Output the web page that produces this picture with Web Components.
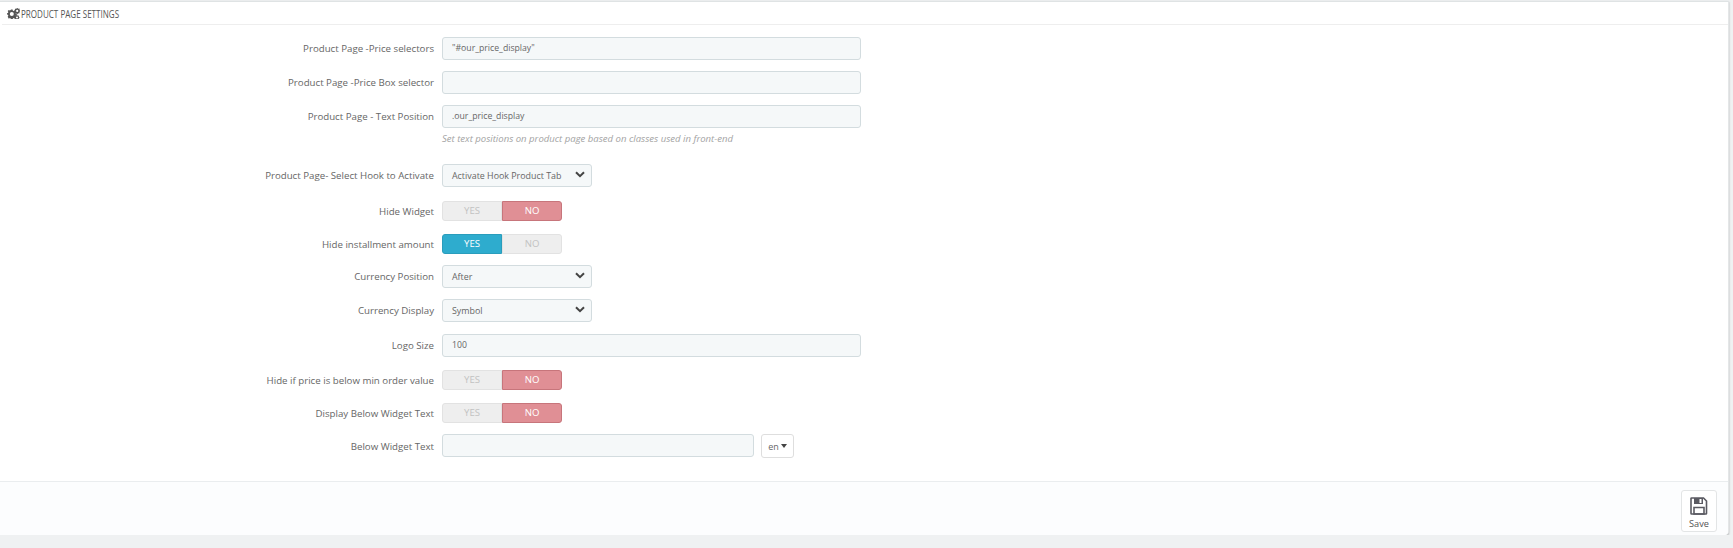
<!DOCTYPE html>
<html>
<head>
<meta charset="utf-8">
<title>Product page settings</title>
<style>
  html, body { margin: 0; background: #eff1f2; }
  body { font-family: "Open Sans", sans-serif; font-size: 10px; color: #555; }
</style>
</head>
<body>
<settings-panel>
  <span slot="title">Product Page Settings</span>
  <form-row label="Product Page -Price selectors" gap="11"><text-input value="&quot;#our_price_display&quot;"></text-input></form-row>
  <form-row label="Product Page -Price Box selector" gap="11"><text-input></text-input></form-row>
  <form-row label="Product Page - Text Position" gap="36" help="Set text positions on product page based on classes used in front-end"><text-input value=".our_price_display"></text-input></form-row>
  <form-row label="Product Page- Select Hook to Activate" gap="14"><select-box value="Activate Hook Product Tab"></select-box></form-row>
  <form-row label="Hide Widget" gap="13"><toggle-switch></toggle-switch></form-row>
  <form-row label="Hide installment amount" gap="11"><toggle-switch on></toggle-switch></form-row>
  <form-row label="Currency Position" gap="11"><select-box value="After"></select-box></form-row>
  <form-row label="Currency Display" gap="12"><select-box value="Symbol"></select-box></form-row>
  <form-row label="Logo Size" gap="13"><text-input value="100"></text-input></form-row>
  <form-row label="Hide if price is below min order value" gap="13"><toggle-switch></toggle-switch></form-row>
  <form-row label="Display Below Widget Text" gap="11"><toggle-switch></toggle-switch></form-row>
  <form-row label="Below Widget Text" gap="0"><text-input short></text-input><lang-button>en</lang-button></form-row>
  <save-button slot="footer">Save</save-button>
</settings-panel>

<script>
class SettingsPanel extends HTMLElement {
  constructor() {
    super();
    this.attachShadow({ mode: 'open' }).innerHTML = `
      <style>
        :host {
          display: flex;
          flex-direction: column;
          width: 1729px;
          height: 534px;
          margin-top: 1px;
          box-sizing: border-box;
          background: #fff;
          border-top: 1px solid #dfe3e4;
          border-right: 1px solid #e4e6e7;
          border-radius: 0 0 4px 0;
          box-shadow: 0 1px 2px rgba(0, 0, 0, 0.3);
        }
        .heading {
          display: flex;
          align-items: center;
          gap: 1px;
          height: 22px;
          margin-left: 2px;
          padding-left: 5px;
          border-bottom: 1px solid #eeeeee;
          color: #555;
        }
        .title {
          display: inline-block;
          font-size: 11.5px;
          text-transform: uppercase;
          white-space: nowrap;
          transform: scaleX(0.7);
          transform-origin: left center;
        }
        svg { display: block; }
        .body { flex: 1; padding-top: 12px; }
        .footer {
          display: flex;
          justify-content: flex-end;
          height: 54px;
          box-sizing: border-box;
          padding: 8px 11px 0 0;
          background: #fcfdfe;
          border-top: 1px solid #eaedef;
          border-radius: 0 0 4px 0;
        }
      </style>
      <div class="heading">
        <svg width="13" height="11" viewBox="0 0 13 11" fill="#555">
          <path fill-rule="evenodd" d="M4 1.500h1.600l.3 1.200.8.4 1.100-.6 1.100 1.100-.6 1.100.3.8 1.200.3v1.600l-1.200.3-.3.8.6 1.100-1.100 1.100-1.100-.6-.8.3-.3 1.200H4l-.3-1.200-.8-.3-1.100.6L.7 8.700l.6-1.100-.3-.8L0 6.500V5.200l1-.3.3-.8-.6-1.100 1.100-1.100 1.100.6.8-.4zM4.800 3.900a2 2 0 1 0 0 4 2 2 0 0 0 0-4z"/>
          <path fill-rule="evenodd" d="M10.600 0l.3.7.6.1.6-.4.7.7-.4.6.1.5.9.3v1l-.9.2-.2.6.4.6-.7.7-.6-.4-.5.2-.3.8h-.9l-.2-.8-.6-.2-.6.4-.6-.7.4-.6-.2-.6-.7-.2v-1l.7-.2.2-.6-.4-.5.7-.7.6.4.5-.2.2-.7zM10.200 1.800a1.100 1.100 0 1 0 0 2.200 1.100 1.100 0 0 0 0-2.200z"/>
          <path fill-rule="evenodd" d="M10.200 7l.3.6.5.1.5-.3.6.6-.3.5.1.5.6.2v.9l-.6.2-.1.5.3.5-.6.5-.5-.3-.5.2-.2.5h-.8l-.2-.6-.4-.1-.5.3-.6-.6.3-.5-.1-.4-.6-.2v-.9l.6-.2.1-.5-.3-.5.6-.6.5.3.4-.1.2-.6zM10 8.400a1 1 0 1 0 0 2 1 1 0 0 0 0-2z"/>
        </svg>
        <span class="title"><slot name="title"></slot></span>
      </div>
      <div class="body"><slot></slot></div>
      <div class="footer"><slot name="footer"></slot></div>
    `;
  }
}

class FormRow extends HTMLElement {
  constructor() {
    super();
    this.attachShadow({ mode: 'open' }).innerHTML = `
      <style>
        :host { display: block; }
        .row { display: flex; align-items: center; gap: 8px; }
        label {
          flex: 0 0 434px;
          text-align: right;
          font-size: 9.7px;
          color: #666;
        }
        .controls { display: flex; gap: 7px; align-items: flex-start; }
        .help {
          margin: 4px 0 0 442px;
          font-size: 9.55px;
          line-height: 13px;
          font-style: italic;
          color: #a3a3a3;
        }
      </style>
      <div class="row">
        <label></label>
        <div class="controls"><slot></slot></div>
      </div>
      <div class="help" hidden></div>
    `;
  }

  connectedCallback() {
    this.shadowRoot.querySelector('label').textContent = this.getAttribute('label');
    this.style.marginBottom = this.getAttribute('gap') + 'px';
    const help = this.shadowRoot.querySelector('.help');
    if (this.hasAttribute('help')) {
      help.textContent = this.getAttribute('help');
      help.hidden = false;
      // the help text sits inside the gap below the row
      this.style.marginBottom = (this.getAttribute('gap') - 17) + 'px';
    }
  }
}

class TextInput extends HTMLElement {
  constructor() {
    super();
    this.attachShadow({ mode: 'open' }).innerHTML = `
      <style>
        :host {
          display: block;
          width: 419px;
          height: 23px;
          box-sizing: border-box;
          padding: 0 9px;
          background: #f5f8f9;
          border: 1px solid #d3dcdf;
          border-radius: 3px;
          font-size: 8.7px;
          line-height: 21px;
          color: #666;
        }
        :host([short]) { width: 312px; }
      </style>
      <span></span>
    `;
  }

  connectedCallback() {
    this.shadowRoot.querySelector('span').textContent = this.getAttribute('value') || '';
  }
}

class SelectBox extends HTMLElement {
  constructor() {
    super();
    this.attachShadow({ mode: 'open' }).innerHTML = `
      <style>
        :host {
          display: flex;
          align-items: center;
          justify-content: space-between;
          width: 150px;
          height: 23px;
          box-sizing: border-box;
          padding: 0 6px 0 9px;
          background: #f5f8f9;
          border: 1px solid #d3dcdf;
          border-radius: 3px;
          font-size: 8.9px;
          color: #666;
        }
        svg { display: block; margin-top: -3px; }
      </style>
      <span></span>
      <svg width="10" height="7" viewBox="0 0 10 7"><path d="M1 1.200l4 4 4-4" fill="none" stroke="#444" stroke-width="2"/></svg>
    `;
  }

  connectedCallback() {
    this.shadowRoot.querySelector('span').textContent = this.getAttribute('value');
  }
}

class ToggleSwitch extends HTMLElement {
  constructor() {
    super();
    this.attachShadow({ mode: 'open' }).innerHTML = `
      <style>
        :host {
          display: flex;
          width: 120px;
          height: 20px;
          font-size: 9.6px;
          line-height: 18px;
          text-align: center;
        }
        span {
          flex: 1;
          box-sizing: border-box;
          background: #eeeeee;
          border: 1px solid #e2e2e2;
          color: #c2c2c2;
        }
        .yes { border-radius: 3px 0 0 3px; }
        .no { border-radius: 0 3px 3px 0; }
        :host(:not([on])) .no { background: #e08f95; border-color: #c7757b; color: #fff; }
        :host([on]) .yes { background: #2eacce; border-color: #2a9dbc; color: #fff; }
      </style>
      <span class="yes">YES</span><span class="no">NO</span>
    `;
  }
}

class LangButton extends HTMLElement {
  constructor() {
    super();
    this.attachShadow({ mode: 'open' }).innerHTML = `
      <style>
        :host {
          display: flex;
          align-items: center;
          justify-content: center;
          gap: 2px;
          width: 33px;
          height: 24px;
          box-sizing: border-box;
          background: #fff;
          border: 1px solid #dedede;
          border-radius: 3px;
          font-size: 9px;
          color: #666;
        }
        i { border: 3.5px solid transparent; border-top: 4px solid #444; border-bottom: 0; }
      </style>
      <slot></slot><i></i>
    `;
  }
}

class SaveButton extends HTMLElement {
  constructor() {
    super();
    this.attachShadow({ mode: 'open' }).innerHTML = `
      <style>
        :host {
          display: flex;
          flex-direction: column;
          align-items: center;
          width: 36px;
          height: 42px;
          box-sizing: border-box;
          padding-top: 6px;
          background: #fff;
          border: 1px solid #e3e5e6;
          border-radius: 3px;
          font-size: 9.2px;
          line-height: 13px;
          color: #555;
        }
        svg { display: block; margin-bottom: 2px; }
      </style>
      <svg width="18" height="18" viewBox="0 0 18 18">
        <path d="M1.500 1h12l3 3v12.500a.5.5 0 0 1-.5.5H1.500a.5.5 0 0 1-.5-.5v-15a.5.5 0 0 1 .5-.5z" fill="none" stroke="#5a5a62" stroke-width="1.600"/>
        <path d="M4 1h9v6H4z" fill="#5a5a62"/>
        <path d="M9.500 2h2v4h-2z" fill="#fff"/>
        <path d="M4 10.500h10V17H4z" fill="none" stroke="#5a5a62" stroke-width="1.600"/>
      </svg>
      <slot></slot>
    `;
  }
}

customElements.define('settings-panel', SettingsPanel);
customElements.define('form-row', FormRow);
customElements.define('text-input', TextInput);
customElements.define('select-box', SelectBox);
customElements.define('toggle-switch', ToggleSwitch);
customElements.define('lang-button', LangButton);
customElements.define('save-button', SaveButton);
</script>
</body>
</html>
